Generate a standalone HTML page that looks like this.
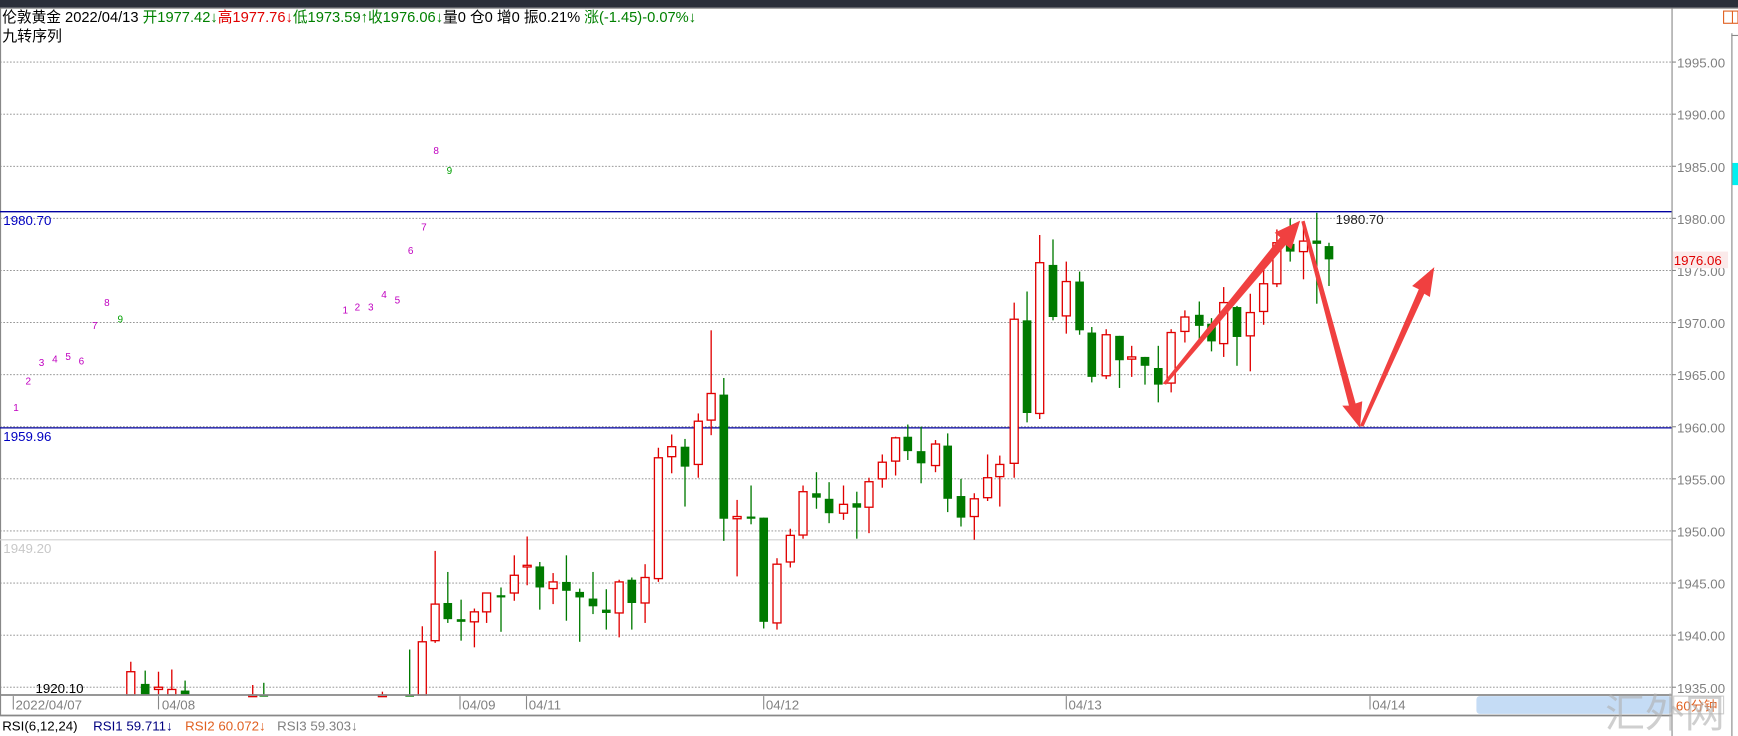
<!DOCTYPE html>
<html><head><meta charset="utf-8"><style>
html,body{margin:0;padding:0;background:#fff;overflow:hidden}
svg{display:block}
text{font-family:"Liberation Sans","Noto Sans CJK SC",sans-serif}
</style></head><body>
<svg id="s" width="1738" height="736" viewBox="0 0 1568 664" preserveAspectRatio="none" xmlns="http://www.w3.org/2000/svg">
<rect x="0" y="0" width="1568" height="664" fill="#fff"/>
<rect x="0" y="0" width="1568" height="7" fill="#2b2f3a"/>
<line x1="0" y1="7.5" x2="1568" y2="7.5" stroke="#999" stroke-width="1"/>
<line x1="0.5" y1="7" x2="0.5" y2="645" stroke="#888"/>
<g id="grid"></g>
<line x1="0" y1="487" x2="1508" y2="487" stroke="#d0d0d0" stroke-width="1"/>
<line x1="0" y1="191" x2="1508" y2="191" stroke="#0000a0" stroke-width="1.2"/>
<line x1="0" y1="386" x2="1508" y2="386" stroke="#0000a0" stroke-width="1.2"/>
<g id="candles"></g>
<text x="3" y="203" font-size="12" fill="#0000c0">1980.70</text>
<text x="3" y="398" font-size="12" fill="#0000c0">1959.96</text>
<text x="3" y="499" font-size="12" fill="#c8c8c8">1949.20</text>
<text x="32" y="625" font-size="12" fill="#000">1920.10</text>
<text x="1205" y="202" font-size="12" fill="#222">1980.70</text>
<g font-size="9" fill="#c000c0">
<text x="12" y="371">1</text><text x="23" y="347">2</text><text x="35" y="330">3</text><text x="47" y="327">4</text><text x="59" y="325">5</text><text x="71" y="329">6</text><text x="83" y="297">7</text><text x="94" y="276">8</text>
<text x="309" y="283">1</text><text x="320" y="280">2</text><text x="332" y="280">3</text><text x="344" y="269">4</text><text x="356" y="274">5</text><text x="368" y="229">6</text><text x="380" y="208">7</text><text x="391" y="139">8</text>
</g>
<g font-size="9" fill="#00a000"><text x="106" y="291">9</text><text x="403" y="157">9</text></g>
<!-- arrows -->
<g fill="#f04040">
<polygon points="1049,346 1052,347 1160,221 1165,225 1173,199 1150,210 1155,214"/>
<polygon points="1174,200 1177,199 1223,364 1229,362 1227,386 1211,366 1217,366"/>
<polygon points="1227,384 1230,385 1285,265 1290,268 1294,241 1274,258 1280,261"/>
</g>
<!-- right axis -->
<line x1="1508.5" y1="7" x2="1508.5" y2="664" stroke="#888" stroke-width="1"/>
<g id="axis" font-size="12" fill="#808080"></g>
<rect x="1509" y="227" width="50" height="15" fill="#fbeaea"/>
<text x="1510" y="239" font-size="12" fill="#e00000">1976.06</text>
<line x1="1562.5" y1="30" x2="1562.5" y2="664" stroke="#888"/>
<line x1="1562" y1="32" x2="1568" y2="32" stroke="#888"/>
<rect x="1563" y="147" width="5" height="20" fill="#00f0f0"/>
<rect x="1555" y="10" width="13" height="11" fill="none" stroke="#e06020"/>
<line x1="1563" y1="10" x2="1563" y2="21" stroke="#e06020"/>
<!-- date band -->
<line x1="0" y1="627" x2="1508" y2="627" stroke="#888" stroke-width="1.5"/>
<line x1="0" y1="645.5" x2="1508" y2="645.5" stroke="#888" stroke-width="1.5"/>
<rect x="1332" y="628" width="176" height="16" fill="#c5dcf5" rx="3"/>
<g font-size="12" fill="#808080">
<text x="14" y="640">2022/04/07</text><text x="146" y="640">04/08</text><text x="417" y="640">04/09</text><text x="477" y="640">04/11</text><text x="691" y="640">04/12</text><text x="964" y="640">04/13</text><text x="1238" y="640">04/14</text>
</g>
<g stroke="#888"><line x1="12" y1="628" x2="12" y2="640"/><line x1="143" y1="628" x2="143" y2="640"/><line x1="415" y1="628" x2="415" y2="640"/><line x1="475" y1="628" x2="475" y2="640"/><line x1="689" y1="628" x2="689" y2="640"/><line x1="962" y1="628" x2="962" y2="640"/><line x1="1236" y1="628" x2="1236" y2="640"/></g>
<rect x="1510" y="628" width="45" height="16" fill="#fff" stroke="#ccc"/>
<text x="1512" y="641" font-size="12" fill="#e06020">60分钟</text>
<text x="1448" y="656" font-size="36" fill="#b0b0b0" opacity="0.6">汇外网</text>
<!-- RSI -->
<g font-size="12">
<text x="2" y="659" fill="#000">RSI(6,12,24)</text>
<text x="84" y="659" fill="#000080">RSI1 59.711↓</text>
<text x="167" y="659" fill="#e06020">RSI2 60.072↓</text>
<text x="250" y="659" fill="#808080">RSI3 59.303↓</text>
</g>
<!-- header -->
<text x="2" y="20" font-size="13.5" textLength="626" lengthAdjust="spacingAndGlyphs"><tspan fill="#000">伦敦黄金 2022/04/13 </tspan><tspan fill="#008000">开1977.42↓</tspan><tspan fill="#e00000">高1977.76↓</tspan><tspan fill="#008000">低1973.59↑收1976.06↓</tspan><tspan fill="#000">量0  仓0 增0 振0.21% </tspan><tspan fill="#008000">涨(-1.45)-0.07%↓</tspan></text>
<text x="2" y="37" font-size="13.5" fill="#000">九转序列</text>
</svg>
<script>
var NS="http://www.w3.org/2000/svg";
function el(p,t,a){var e=document.createElementNS(NS,t);for(var k in a)e.setAttribute(k,a[k]);p.appendChild(e);return e;}
var g=document.getElementById('grid'),ax=document.getElementById('axis');
for(var p=1935;p<=1995;p+=5){var y=197-(p-1980)*9.4;
el(g,'line',{x1:0,y1:y,x2:1508,y2:y,stroke:'#888','stroke-width':0.8,'stroke-dasharray':'1.5,1.5'});
el(ax,'line',{x1:1508,y1:y,x2:1512,y2:y,stroke:'#888'});
var t=el(ax,'text',{x:1513,y:y+5});t.textContent=p.toFixed(2);}
var C=[
[118,'r',606,627,597,627],[131,'g',617,627,605,627],[143,'r',620,622,606,627],[155,'r',622,627,604,627],[167,'g',623,627,614,627],
[228,'r',627,627,618,627],[238,'g',627,627,616,627],[345,'r',627,627,624,627],
[369.6,'g',627,627,586,627],[381,'r',579,627,565,627],[392.6,'r',545,578,497,580],[404,'g',544,558.6,516,562],[416,'g',558.6,561,541,578],
[428,'r',552,561,549,584],[439,'r',535,552,535,562],[452,'g',537,539,530,570],[464,'r',519,535,501,542],[475.6,'r',510,511,484,528],
[487,'g',511,530,507,550],[499,'r',525,531,517,545],[511,'g',525,533,501,560],[523,'g',534,539,531,579],[535,'g',540,547,516,554],
[547,'g',550,553,531.6,568],[558.6,'r',525,553,523,575],[570,'g',523,544,521,568],[582,'r',521,544,509,562],[594,'r',413,522,404,525],
[606,'r',403,412,392,427],[618,'g',403,421,396,457],[630,'r',380,419,373,431],[641.6,'r',355,379,298,392.6],[653,'g',356,468,341,488],
[665,'r',466,468,451,520],[677.6,'g',466,468,438,473],[689,'g',467,561,467,567],[701,'r',509,562,503.6,568],[713,'r',483,507,477,512],
[724.5,'r',443.6,482.7,438,486],[736.6,'g',445,449,426,459],[748,'g',450,463,435,472],[761,'r',455,463,438,469],[773,'g',454,458,443.6,486],
[784,'r',434.6,457.6,431,481],[796,'r',417,432,410,440],[808,'r',395,416,394,429],[819,'g',394,407,383,415],[831,'g',407,418,385,436],
[844,'r',400.6,420,397,426],[855,'g',402,450,391,462],[867,'g',447.5,467,432,475],[879,'r',450,466,445,487],[891,'r',431,449,410,452],
[902,'r',419,430,411,457],[915,'r',288,418,273,431],[926.6,'g',289,372.6,263,381],[938,'r',237,373,212,378],[950,'g',239,286,216,289],
[962,'r',254,285,236,301],[974,'g',254,298,245,302],[985,'g',300,340,295,345],[998,'r',302,339,297,342],[1010,'g',303,325,303,350],
[1021,'r',322,324,312,340],[1033,'g',322,330,322,347],[1045,'g',332,347,312,363],[1056.6,'r',300,345.6,297,354],[1069,'r',286,299,280,309],
[1082,'g',284,294,272,307],[1093,'g',292,308,287,317],[1104,'r',273,310,259,322],[1116,'g',277,304,276,330],[1128,'r',282,303,265,335],
[1140,'r',256,281,241,293],[1152,'r',219,256,207,259],[1164,'g',220,227,197,236],[1176,'r',217.5,227,203,252],[1188,'g',217,220,192,274],
[1199,'g',222,234,219,258]];
var cg=document.getElementById('candles');
C.forEach(function(c){var x=c[0],red=c[1]=='r',col=red?'#e00000':'#007a00';
el(cg,'line',{x1:x,y1:c[4],x2:x,y2:c[5],stroke:col,'stroke-width':1.2});
var h=Math.max(c[3]-c[2],1.5);
if(red)el(cg,'rect',{x:x-3.6,y:c[2],width:7.2,height:h,fill:'#fff',stroke:col,'stroke-width':1.2});
else el(cg,'rect',{x:x-3.9,y:c[2],width:7.8,height:h,fill:col});});
</script>
</body></html>
